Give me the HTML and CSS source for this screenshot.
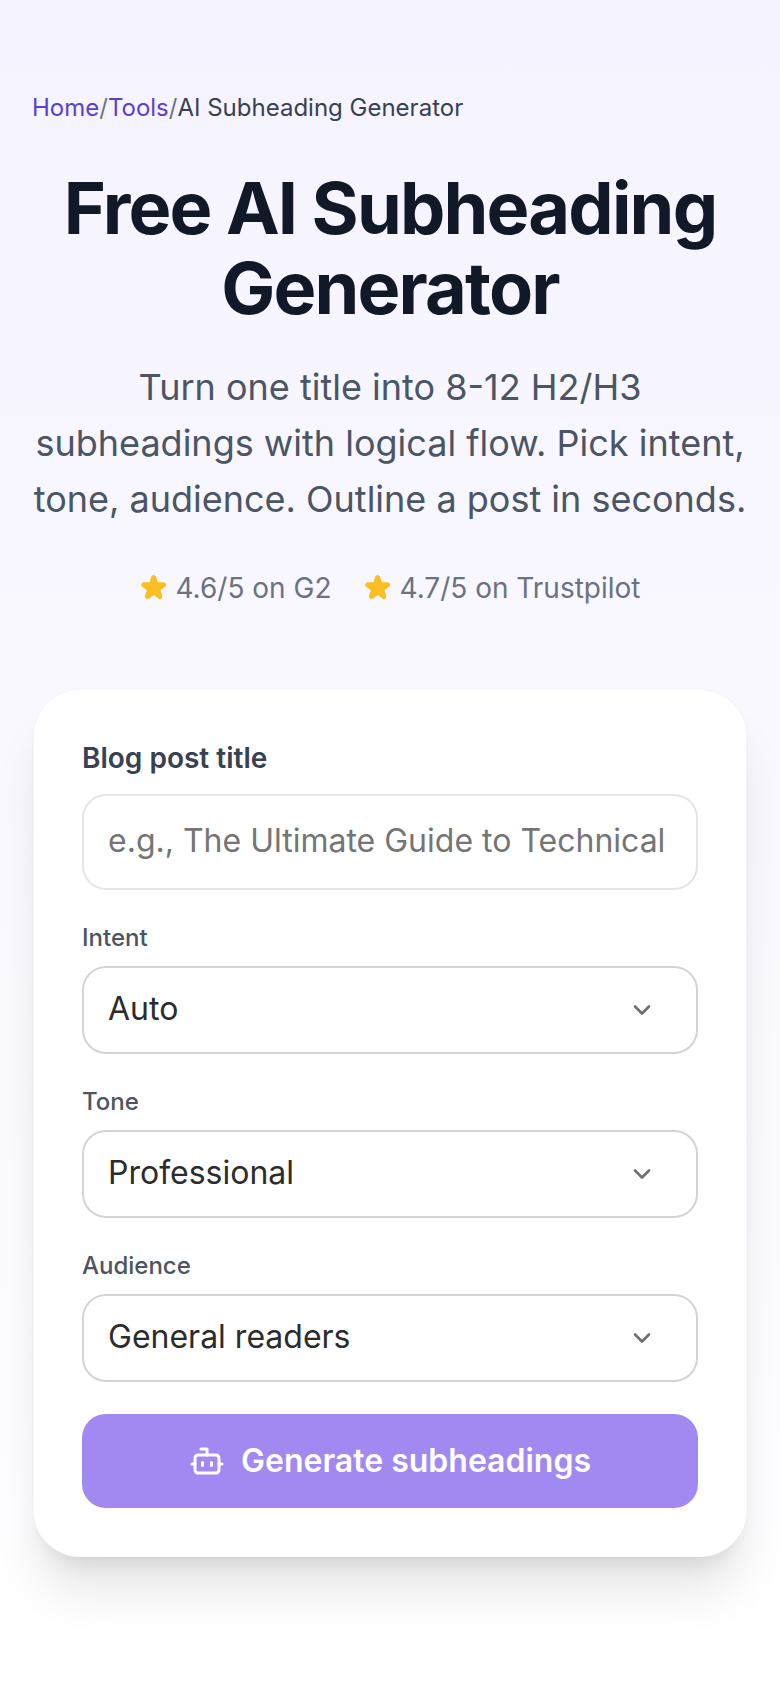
FILE: index.html
```
<!DOCTYPE html>
<html lang="en">
<head>
<meta charset="UTF-8">
<meta name="viewport" content="width=device-width, initial-scale=1.0">
<title>Free AI Subheading Generator</title>
<link rel="stylesheet" href="styles.css">
</head>
<body>
<main class="page">
    <nav class="breadcrumb" aria-label="Breadcrumb">
        <a href="#">Home</a><span>/</span><a href="#">Tools</a><span>/</span><span class="current">AI Subheading Generator</span>
    </nav>

    <header class="hero">
        <h1>Free AI Subheading Generator</h1>
        <p>Turn one title into 8-12 H2/H3 subheadings with logical flow. Pick intent, tone, audience. Outline a post in seconds.</p>
        <div class="ratings">
            <span class="rating">
                <svg viewBox="0.6 1 18 18" aria-hidden="true"><path d="M9.049 2.927c.3-.921 1.603-.921 1.902 0l1.07 3.292a1 1 0 00.95.69h3.462c.969 0 1.371 1.24.588 1.81l-2.8 2.034a1 1 0 00-.364 1.118l1.07 3.292c.3.921-.755 1.688-1.54 1.118l-2.8-2.034a1 1 0 00-1.175 0l-2.8 2.034c-.784.57-1.838-.197-1.539-1.118l1.07-3.292a1 1 0 00-.364-1.118L2.98 8.72c-.783-.57-.38-1.81.588-1.81h3.461a1 1 0 00.951-.69l1.07-3.292z"/></svg>
                4.6/5 on G2
            </span>
            <span class="rating">
                <svg viewBox="0.6 1 18 18" aria-hidden="true"><path d="M9.049 2.927c.3-.921 1.603-.921 1.902 0l1.07 3.292a1 1 0 00.95.69h3.462c.969 0 1.371 1.24.588 1.81l-2.8 2.034a1 1 0 00-.364 1.118l1.07 3.292c.3.921-.755 1.688-1.54 1.118l-2.8-2.034a1 1 0 00-1.175 0l-2.8 2.034c-.784.57-1.838-.197-1.539-1.118l1.07-3.292a1 1 0 00-.364-1.118L2.98 8.72c-.783-.57-.38-1.81.588-1.81h3.461a1 1 0 00.951-.69l1.07-3.292z"/></svg>
                4.7/5 on Trustpilot
            </span>
        </div>
    </header>

    <form class="card">
        <div class="field">
            <label class="title-label" for="postTitle">Blog post title</label>
            <input type="text" id="postTitle" placeholder="e.g., The Ultimate Guide to Technical SEO">
        </div>
        <div class="field">
            <label for="intent">Intent</label>
            <div class="select">
                <select id="intent">
                    <option>Auto</option>
                    <option>Informational</option>
                    <option>Commercial</option>
                </select>
                <svg viewBox="0 0 24 24" aria-hidden="true"><path d="m6 9 6 6 6-6"/></svg>
            </div>
        </div>
        <div class="field">
            <label for="tone">Tone</label>
            <div class="select">
                <select id="tone">
                    <option>Professional</option>
                    <option>Casual</option>
                    <option>Friendly</option>
                </select>
                <svg viewBox="0 0 24 24" aria-hidden="true"><path d="m6 9 6 6 6-6"/></svg>
            </div>
        </div>
        <div class="field">
            <label for="audience">Audience</label>
            <div class="select">
                <select id="audience">
                    <option>General readers</option>
                    <option>Beginners</option>
                    <option>Experts</option>
                </select>
                <svg viewBox="0 0 24 24" aria-hidden="true"><path d="m6 9 6 6 6-6"/></svg>
            </div>
        </div>
        <button type="button" class="generate">
            <svg viewBox="0 0 24 24" aria-hidden="true">
                <path d="M12 8V4H8"/>
                <rect width="16" height="12" x="4" y="8" rx="2"/>
                <path d="M2 14h2M20 14h2M15 13v2M9 13v2"/>
            </svg>
            Generate subheadings
        </button>
    </form>
</main>
</body>
</html>
```
FILE: styles.css
```
* {
    box-sizing: border-box;
}

body {
    margin: 0;
    font-family: Inter, "Liberation Sans", sans-serif;
    background-color: #fff;
}

.page {
    min-height: 100vh;
    padding: 92px 32px 128px;
    background: linear-gradient(to bottom, #f5f3ff, #fff);
}

/* breadcrumb */
.breadcrumb {
    display: flex;
    font-size: 24px;
    line-height: 32px;
    color: #6b7280;
}
.breadcrumb a {
    color: #5b3fd0;
    text-decoration: none;
}
.breadcrumb .current {
    color: #374151;
}

/* hero */
.hero {
    margin-top: 44px;
    text-align: center;
}
.hero h1 {
    margin: 0;
    font-size: 72px;
    line-height: 80px;
    font-weight: 700;
    letter-spacing: -0.025em;
    color: #111827;
}
.hero p {
    margin: 31px 0 0;
    font-size: 36px;
    line-height: 56px;
    color: #4b5563;
}
.ratings {
    display: flex;
    flex-wrap: wrap;
    justify-content: center;
    gap: 32px;
    margin-top: 41px;
    font-size: 28px;
    line-height: 40px;
    color: #6b7280;
}
.rating {
    display: flex;
    align-items: center;
    gap: 8px;
}
.rating svg {
    width: 28px;
    height: 28px;
    fill: #fbbf24;
    stroke: #fbbf24;
    stroke-width: 1.2;
    stroke-linejoin: round;
}

/* form card */
.card {
    display: flex;
    flex-direction: column;
    gap: 32px;
    margin-top: 80px;
    padding: 48px;
    background-color: #fff;
    background-clip: padding-box;
    border: 2px solid rgba(0, 0, 0, 0.01);
    border-radius: 48px;
    box-shadow: 0 40px 50px -10px rgba(0, 0, 0, 0.1), 0 16px 20px -12px rgba(0, 0, 0, 0.1);
}
.field {
    display: flex;
    flex-direction: column;
    gap: 12px;
}
.field label {
    font-size: 24px;
    line-height: 32px;
    font-weight: 500;
    color: #4b5563;
}
.field .title-label {
    margin-bottom: 4px;
    font-size: 28px;
    line-height: 40px;
    font-weight: 600;
    color: #374151;
}
.field input,
.field select {
    width: 100%;
    padding: 0 24px 3px;
    font-family: inherit;
    font-size: 32px;
    color: #2c2c2c;
    background-color: #fff;
    border-radius: 24px;
}
.field input {
    height: 96px;
    border: 2px solid #e5e5e5;
}
.field input::placeholder {
    color: #757575;
}
.field select {
    height: 88px;
    border: 2px solid #d4d4d4;
    appearance: none;
}
.select {
    position: relative;
}
.select svg {
    position: absolute;
    top: 30px;
    right: 42px;
    width: 28px;
    height: 28px;
    fill: none;
    stroke: #6b6f76;
    stroke-width: 2.25;
    stroke-linecap: round;
    stroke-linejoin: round;
    pointer-events: none;
}

.generate {
    display: flex;
    align-items: center;
    justify-content: center;
    gap: 16px;
    padding: 28px;
    font-family: inherit;
    font-size: 32px;
    line-height: 38px;
    font-weight: 600;
    color: #fff;
    background-color: #a289f1;
    border: none;
    border-radius: 24px;
    cursor: pointer;
}
.generate svg {
    width: 36px;
    height: 36px;
    fill: none;
    stroke: currentColor;
    stroke-width: 2;
    stroke-linecap: round;
    stroke-linejoin: round;
}
```
